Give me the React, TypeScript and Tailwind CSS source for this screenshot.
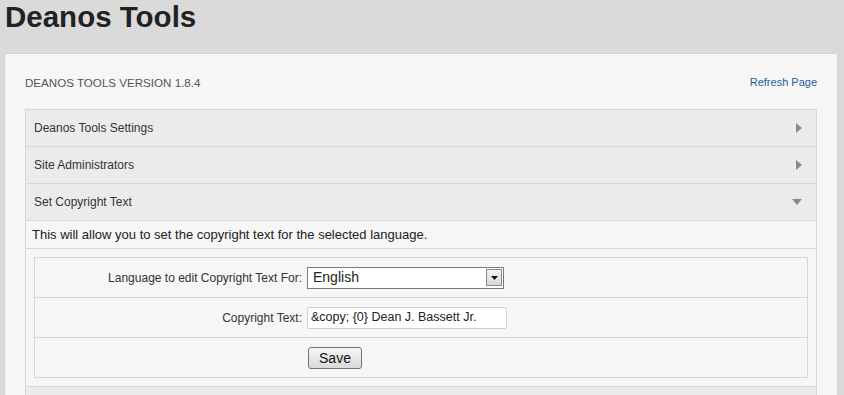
import React from "react";

const sections = [
  { title: "Deanos Tools Settings", open: false },
  { title: "Site Administrators", open: false },
  { title: "Set Copyright Text", open: true },
];

function ArrowRight() {
  return (
    <svg width="6" height="10" viewBox="0 0 6 10" className="block">
      <path d="M0 0 L6 5 L0 10 Z" fill="#8a8a8a" />
    </svg>
  );
}

function ArrowDown() {
  return (
    <svg width="10" height="6" viewBox="0 0 10 6" className="block">
      <path d="M0 0 L10 0 L5 6 Z" fill="#8a8a8a" />
    </svg>
  );
}

export default function App() {
  return (
    <div
      className="min-h-screen bg-[#dadada] text-[#333]"
      style={{ fontFamily: '"Liberation Sans", Arial, sans-serif' }}
    >
      {/* title */}
      <h1 className="h-[53px] pl-[5px] pt-[1px] text-[29.5px] font-bold leading-[32px] text-[#222]">
        Deanos Tools
      </h1>

      {/* panel */}
      <div className="ml-[4px] mr-[6px] border border-[#d2d2d2] bg-[#f6f6f6] px-[20px] pb-10">
        <div className="flex h-[55px] items-center justify-between pt-[2px]">
          <span className="text-[11.6px] text-[#555]">DEANOS TOOLS VERSION 1.8.4</span>
          <a className="text-[11px] text-[#22609b]">Refresh Page</a>
        </div>

        <div className="border border-[#d6d6d6]">
          {sections.map((s, i) => (
            <div key={i}>
              <div
                className={
                  i > 0
                    ? "flex h-[37px] items-center justify-between border-t border-[#d6d6d6] bg-[#ebebeb] pl-[8px] pr-[14px]"
                    : "flex h-[36px] items-center justify-between bg-[#ebebeb] pl-[8px] pr-[14px]"
                }
              >
                <span className="text-[12px] text-[#333]">{s.title}</span>
                {s.open ? <ArrowDown /> : <ArrowRight />}
              </div>

              {s.open && (
                <div className="border-t border-[#d6d6d6] bg-[#f6f6f6]">
                  <div className="flex h-[28px] items-center border-b border-[#d6d6d6] pl-[6px] text-[13px] text-[#222]">
                    This will allow you to set the copyright text for the selected language.
                  </div>

                  <div className="p-[8px]">
                    <div className="border border-[#d6d6d6] text-[12px] text-[#333]">
                      {/* language */}
                      <div className="flex h-[40px] items-center border-b border-[#d6d6d6]">
                        <div className="w-[270px] pr-[3px] text-right">
                          Language to edit Copyright Text For:
                        </div>
                        <div className="ml-[2px] flex h-[22px] w-[197px] items-center justify-between border border-[#7a7a7a] bg-white pl-[5px] pr-[1px]">
                          <span className="text-[14px] text-[#222]">English</span>
                          <div className="flex h-[17px] w-[16px] items-center justify-center border border-[#8a8a8a] bg-gradient-to-b from-[#f4f4f4] to-[#d8d8d8]">
                            <svg width="7" height="4" viewBox="0 0 7 4" className="block">
                              <path d="M0 0 L7 0 L3.5 4 Z" fill="#111" />
                            </svg>
                          </div>
                        </div>
                      </div>

                      {/* copyright text */}
                      <div className="flex h-[40px] items-center border-b border-[#d6d6d6]">
                        <div className="w-[270px] pr-[3px] text-right">Copyright Text:</div>
                        <div className="ml-[2px] flex h-[22px] w-[200px] items-center rounded-[2px] border border-[#cfcfcf] bg-white pl-[3px] text-[12.5px] text-[#222]">
                          &amp;copy; {"{0}"} Dean J. Bassett Jr.
                        </div>
                      </div>

                      {/* save */}
                      <div className="flex h-[39px] items-center">
                        <div className="w-[270px]" />
                        <button className="ml-[3px] h-[22px] w-[54px] rounded-[3px] border border-[#707070] bg-gradient-to-b from-[#f6f6f6] to-[#dadada] text-[14px] leading-[20px] text-[#111]">
                          Save
                        </button>
                      </div>
                    </div>
                  </div>

                  <div className="h-[40px] border-t border-[#d6d6d6] bg-[#ebebeb]" />
                </div>
              )}
            </div>
          ))}
        </div>
      </div>
    </div>
  );
}
